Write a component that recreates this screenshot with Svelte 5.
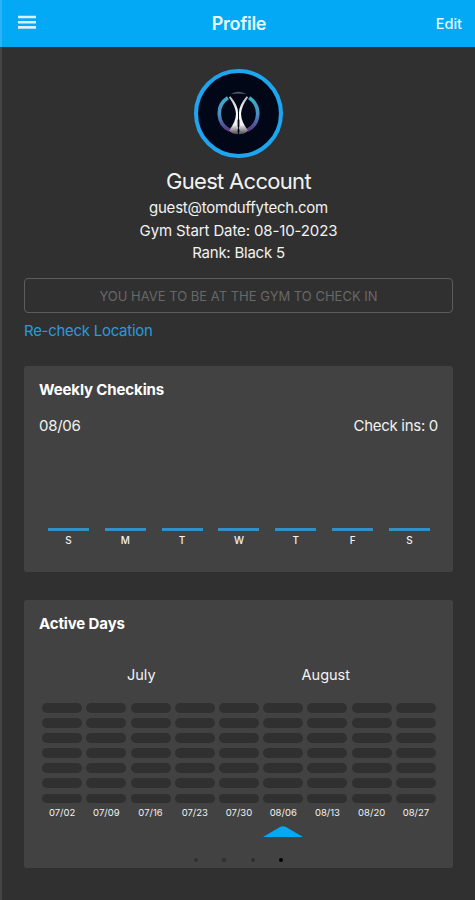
<script lang="ts">
	const user = {
		name: 'Guest Account',
		email: 'guest@tomduffytech.com',
		startDate: '08-10-2023',
		rank: 'Black 5'
	}

	const days = ['S', 'M', 'T', 'W', 'T', 'F', 'S'].map((label) => ({ label, checkins: 0 }))
	const weeks = ['07/02', '07/09', '07/16', '07/23', '07/30', '08/06', '08/13', '08/20', '08/27']
	const currentWeek = '08/06'
	const pages = 4
	let page = 3

	$: total = days.reduce((sum, day) => sum + day.checkins, 0)
</script>

<div class="app">
	<header>
		<button class="menu" aria-label="Menu">
			<svg width="18" height="14" viewBox="0 0 18 14">
				<path d="M0 2h18M0 7.200h18M0 12.400h18" stroke="#d9f1ff" stroke-width="2.600" />
			</svg>
		</button>
		<h1>Profile</h1>
		<button class="edit">Edit</button>
	</header>

	<main>
		<section class="profile">
			<svg class="avatar" viewBox="0 0 88 88">
				<defs>
					<linearGradient id="ring" x1="0" y1="0" x2="0" y2="1">
						<stop offset="0" stop-color="#3cb0c4" />
						<stop offset="0.5" stop-color="#4a8fc4" />
						<stop offset="1" stop-color="#583a85" />
					</linearGradient>
					<linearGradient id="figure" x1="0" y1="0" x2="0" y2="1">
						<stop offset="0" stop-color="#b9bcc2" />
						<stop offset="0.4" stop-color="#ffffff" />
						<stop offset="0.75" stop-color="#f0eff1" />
						<stop offset="1" stop-color="#4b4753" />
					</linearGradient>
				</defs>
				<circle cx="44" cy="44" r="42" fill="#020718" stroke="#1ea5f0" stroke-width="4" />
				<path d="M33.500 28.500A18.500 18.500 0 0 0 35 60.500M54.500 28.500A18.500 18.500 0 0 1 53 60.500" fill="none" stroke="url(#ring)" stroke-width="3.600" />
				<path d="M36 25Q44 20 52 25Q44 23.500 36 25Z" fill="#596069" />
				<path d="M34.500 28L36 27Q43.500 36 43.500 43Q43.500 50 43.500 64.500Q38 64.500 34.500 61Q41.500 52 41.500 44Q41 37 34.500 28Z" fill="url(#figure)" />
				<path d="M53.500 28L52 27Q44.500 36 44.500 43Q44.500 50 44.500 64.500Q50 64.500 53.500 61Q46.500 52 46.500 44Q47 37 53.500 28Z" fill="url(#figure)" />
				<path d="M44 50v7M44 59.500v3" stroke="#06070d" stroke-width="1.800" />
			</svg>
			<h2>{user.name}</h2>
			<p class="email">{user.email}</p>
			<p class="start">Gym Start Date: {user.startDate}</p>
			<p>Rank: {user.rank}</p>
		</section>

		<button class="checkin" disabled>YOU HAVE TO BE AT THE GYM TO CHECK IN</button>
		<button class="recheck">Re-check Location</button>

		<section class="card weekly">
			<h3>Weekly Checkins</h3>
			<div class="summary">
				<span>{currentWeek}</span>
				<span>Check ins: {total}</span>
			</div>
			<div class="chart">
				{#each days as day}
					<div class="day">
						<div class="bar" style:height="{3 + day.checkins * 20}px"></div>
						<span>{day.label}</span>
					</div>
				{/each}
			</div>
		</section>

		<section class="card active">
			<h3>Active Days</h3>
			<div class="months">
				<span>July</span>
				<span>August</span>
			</div>
			<div class="weeks">
				{#each weeks as week}
					<div class="column">
						{#each days as _}
							<div class="pill"></div>
						{/each}
						<span>{week}</span>
						{#if week === currentWeek}
							<svg width="40" height="11" viewBox="0 0 40 11">
								<path d="M0 11L17 1Q20 -0.500 23 1L40 11Z" fill="#03a9f4" />
							</svg>
						{/if}
					</div>
				{/each}
			</div>
			<div class="dots">
				{#each { length: pages } as _, i}
					<i class:current={i === page}></i>
				{/each}
			</div>
		</section>
	</main>
</div>

<style>
	:global(body) {
		background-color: #303030;
		margin: 0;
	}

	.app {
		background-color: #303030;
		box-shadow: inset 2px 0 #444;
		box-sizing: border-box;
		color: #f2f2f2;
		font-family: Inter, 'Liberation Sans', sans-serif;
		height: 900px;
		overflow: hidden;
	}

	h1,
	h2,
	h3,
	p {
		margin: 0;
	}

	button {
		background: none;
		border: none;
		color: inherit;
		font-family: inherit;
		padding: 0;
	}

	header {
		align-items: center;
		background-color: #03a9f4;
		box-shadow: inset 2px 0 #2fb0f8;
		box-sizing: border-box;
		display: grid;
		grid-template-columns: 1fr auto 1fr;
		height: 47px;
		padding: 0 13px 0 18px;
	}

	.menu {
		height: 14px;
		justify-self: start;
		line-height: 0;
		margin-bottom: 3px;
	}

	h1 {
		color: #e9f7ff;
		font-size: 18px;
		font-weight: 600;
		letter-spacing: -0.3px;
		margin-right: 2px;
	}

	.edit {
		color: #e9f7ff;
		font-size: 14.5px;
		font-weight: 500;
		justify-self: end;
	}

	main {
		padding: 22px 22px 0 24px;
	}

	.profile {
		align-items: center;
		display: flex;
		flex-direction: column;
	}

	.avatar {
		height: 89px;
		width: 89px;
	}

	h2 {
		font-size: 22px;
		font-weight: 400;
		letter-spacing: -0.7px;
		line-height: 30px;
		margin-top: 8px;
	}

	p {
		font-size: 15px;
		letter-spacing: -0.24px;
		line-height: 22.5px;
	}

	.email {
		margin-top: 1px;
	}

	.start {
		letter-spacing: -0.12px;
	}

	.checkin {
		border: 1.5px solid #5c5c5c;
		border-radius: 4px;
		color: #686868;
		display: block;
		font-size: 13px;
		height: 35px;
		margin-top: 13.5px;
		width: 100%;
	}

	.recheck {
		color: #299bdc;
		display: block;
		font-size: 15px;
		letter-spacing: -0.28px;
		line-height: 20px;
		margin-top: 8px;
	}

	.card {
		background-color: #424242;
		border-radius: 3px;
		box-sizing: border-box;
		display: flex;
		flex-direction: column;
		padding: 14px 15px 0;
	}

	.weekly {
		height: 206px;
		margin-top: 25px;
	}

	.active {
		height: 268px;
		margin-top: 28px;
	}

	h3 {
		color: #fff;
		font-size: 15px;
		font-weight: 700;
		letter-spacing: -0.12px;
		line-height: 19px;
	}

	.summary {
		display: flex;
		font-size: 15px;
		justify-content: space-between;
		letter-spacing: -0.3px;
		line-height: 20px;
		margin-top: 17px;
	}

	.chart {
		display: grid;
		flex: 1;
		grid-template-columns: repeat(7, 1fr);
		padding: 0 0 26px 1px;
	}

	.day {
		align-items: center;
		display: flex;
		flex-direction: column;
		font-size: 10px;
		font-weight: 500;
		justify-content: flex-end;
		line-height: 12px;
	}

	.bar {
		background-color: #348fc4;
		margin-bottom: 3px;
		width: 41px;
	}

	.months {
		display: flex;
		font-size: 14.5px;
		justify-content: space-between;
		line-height: 20px;
		margin: 32px 88px 0;
	}

	.weeks {
		display: grid;
		grid-template-columns: repeat(9, 1fr);
		height: 134px;
		margin-top: 18px;
		padding-left: 1px;
	}

	.column {
		align-items: center;
		display: flex;
		flex-direction: column;
		font-size: 9.5px;
		line-height: 12px;
	}

	.pill {
		background-color: #303030;
		border-radius: 5px;
		height: 9.6px;
		margin-bottom: 5.5px;
		width: 40px;
	}

	.pill + span {
		margin-top: -2px;
	}

	.column svg {
		margin-top: 7px;
	}

	.dots {
		display: flex;
		gap: 24.5px;
		justify-content: center;
		margin-top: 21px;
	}

	.dots i {
		background-color: #303030;
		border-radius: 50%;
		height: 4px;
		width: 4px;
	}

	.dots .current {
		background-color: #000;
	}
</style>
